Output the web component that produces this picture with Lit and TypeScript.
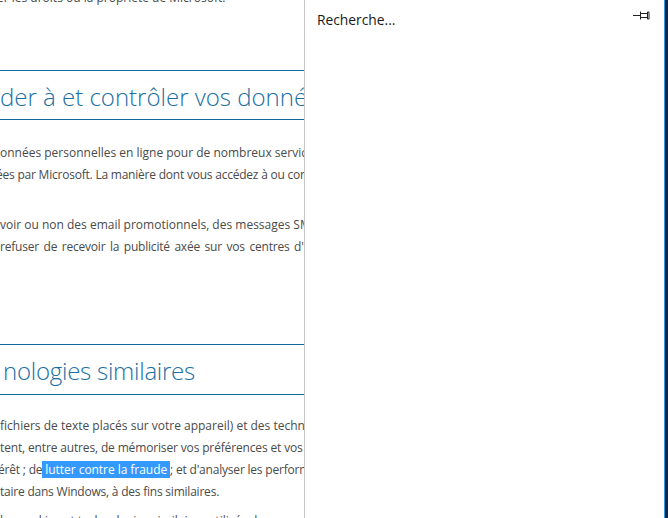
import { LitElement, html, css } from "lit";
import { customElement } from "lit/decorators.js";

@customElement("app-root")
export class AppRoot extends LitElement {
  static styles = css`
    :host {
      display: grid;
      grid-template-columns: 304px 1px 359px 1px 3px;
      width: 668px;
      height: 518px;
      overflow: hidden;
      background: #fff;
      font-family: "Open Sans", "Noto Sans", sans-serif;
    }
    .doc {
      overflow: hidden;
      white-space: nowrap;
      display: flex;
      flex-direction: column;
      color: #4a4a4a;
      font-size: 12px;
    }
    .line {
      height: 22px;
      line-height: 22px;
      flex: none;
    }
    .top { margin-top: -13px; margin-left: -3px; }
    h2 {
      margin: 0;
      flex: none;
      font-weight: 300;
      font-size: 24px;
      line-height: 52px;
      height: 48px;
      color: #1b6fa3;
      border-top: 1px solid #0f6a9c;
      border-bottom: 1px solid #0f6a9c;
    }
    .h1 { margin-top: 61px; }
    .h2b {
      margin-top: 86px;
      height: 49px;
      text-indent: 3px;
      letter-spacing: -0.25px;
    }
    .after-h1 { margin-top: 22px; }
    .gap { margin-top: 28px; }
    .after-h2 { margin-top: 20px; }
    .last { margin-top: 7px; }
    .shifted { margin-left: -4px; letter-spacing: -0.22px; }
    .wide { letter-spacing: -0.22px; word-spacing: 1.75px; }
    .snug { letter-spacing: -0.15px; }
    .tight { margin-left: -2px; letter-spacing: -0.2px; }
    .narrow { letter-spacing: -0.22px; }
    .sel {
      background: #3399ff;
      color: #fff;
      display: inline-block;
      height: 17px;
      line-height: 17px;
      padding: 0 3px;
      letter-spacing: -0.05px;
    }
    .divider { background: #c8c8c8; }
    .pane {
      display: flex;
      justify-content: space-between;
      align-items: flex-start;
      padding: 10px 14px 0 12px;
      color: #1a1a1a;
      font-size: 13.8px;
      line-height: 19px;
    }
    .pin { margin-top: 1px; }
    .edge-blue { background: #3a96dd; }
    .edge-dark { background: #0b2a4a; }
  `;

  render() {
    return html`
      <div class="doc">
        <div class="line top">er les droits ou la propriété de Microsoft.</div>
        <h2 class="h1">der à et contrôler vos données</h2>
        <div class="line after-h1">onnées personnelles en ligne pour de nombreux services</div>
        <div class="line shifted">ées par Microsoft. La manière dont vous accédez à ou contrôlez</div>
        <div class="line gap">voir ou non des email promotionnels, des messages SMS</div>
        <div class="line wide">refuser de recevoir la publicité axée sur vos centres d'intérêt</div>
        <h2 class="h2b">nologies similaires</h2>
        <div class="line after-h2">fichiers de texte placés sur votre appareil) et des techniques</div>
        <div class="line snug">tent, entre autres, de mémoriser vos préférences et vos</div>
        <div class="line tight">érêt ; de<span class="sel">lutter contre la fraude </span>; et d'analyser les performances</div>
        <div class="line narrow">taire dans Windows, à des fins similaires.</div>
        <div class="line last">les cookies et technologies similaires utilisés dans nos</div>
      </div>
      <div class="divider"></div>
      <div class="pane">
        <span>Recherche...</span>
        <svg class="pin" width="17" height="10" viewBox="0 0 17 10" fill="none" stroke="#222" stroke-width="1">
          <path d="M0 4.5H7M7.5 0.5V8.5M8 2.5H14M8 6.5H14M14.5 1V8H16V1Z" />
        </svg>
      </div>
      <div class="edge-blue"></div>
      <div class="edge-dark"></div>
    `;
  }
}
